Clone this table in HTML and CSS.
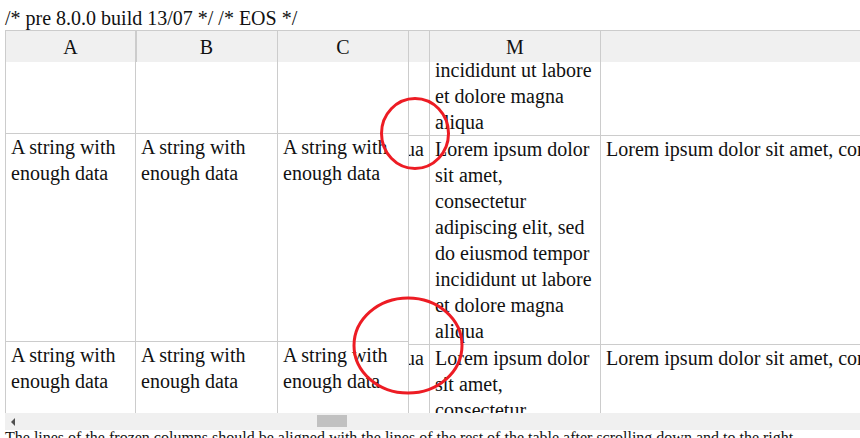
FILE: index.html
```html
<!DOCTYPE html>
<html>
<head>
<meta charset="utf-8">
<link rel="stylesheet" href="styles.css">
</head>
<body>
<div class="title">/* pre 8.0.0 build 13/07 */ /* EOS */</div>
<div class="hot">
  <div class="panes">
    <div class="pane frozen">
      <div class="hrow">
        <div class="hcell ca">A</div>
        <div class="hcell cb hb">B</div>
        <div class="hcell cc">C</div>
      </div>
      <div class="viewport">
        <div class="rows rows-frozen">
          <div class="row frow">
            <div class="cell ca">A string with enough data</div>
            <div class="cell cb">A string with enough data</div>
            <div class="cell cc">A string with enough data</div>
          </div>
          <div class="row frow">
            <div class="cell ca">A string with enough data</div>
            <div class="cell cb">A string with enough data</div>
            <div class="cell cc">A string with enough data</div>
          </div>
          <div class="row frow">
            <div class="cell ca">A string with enough data</div>
            <div class="cell cb">A string with enough data</div>
            <div class="cell cc">A string with enough data</div>
          </div>
        </div>
      </div>
    </div>
    <div class="pane main">
      <div class="hrow">
        <div class="hcell cl"></div>
        <div class="hcell cm">M</div>
        <div class="hcell cn"></div>
      </div>
      <div class="viewport">
        <div class="rows rows-main">
          <div class="row mrow">
            <div class="cell cl"><span>dolore magna aliqua</span></div>
            <div class="cell cm">Lorem ipsum dolor sit amet, consectetur adipiscing elit, sed do eiusmod tempor incididunt ut labore et dolore magna aliqua</div>
            <div class="cell cn">Lorem ipsum dolor sit amet, consectetur adipiscing elit, sed do eiusmod tempor incididunt ut labore et dolore magna aliqua</div>
          </div>
          <div class="row mrow">
            <div class="cell cl"><span>dolore magna aliqua</span></div>
            <div class="cell cm">Lorem ipsum dolor sit amet, consectetur adipiscing elit, sed do eiusmod tempor incididunt ut labore et dolore magna aliqua</div>
            <div class="cell cn">Lorem ipsum dolor sit amet, consectetur adipiscing elit, sed do eiusmod tempor incididunt ut labore et dolore magna aliqua</div>
          </div>
          <div class="row mrow">
            <div class="cell cl"><span>dolore magna aliqua</span></div>
            <div class="cell cm">Lorem ipsum dolor sit amet, consectetur adipiscing elit, sed do eiusmod tempor incididunt ut labore et dolore magna aliqua</div>
            <div class="cell cn">Lorem ipsum dolor sit amet, consectetur adipiscing elit, sed do eiusmod tempor incididunt ut labore et dolore magna aliqua</div>
          </div>
        </div>
      </div>
    </div>
  </div>
  <div class="hscroll">
    <span class="arrow"></span>
    <span class="thumb"></span>
  </div>
</div>
<p class="note">The lines of the frozen columns should be aligned with the lines of the rest of the table after scrolling down and to the right.</p>
<svg class="marks" width="860" height="438" viewBox="0 0 860 438">
  <ellipse cx="415" cy="133.5" rx="33.5" ry="35" fill="none" stroke="#ed1c24" stroke-width="3"/>
  <ellipse cx="408" cy="345.5" rx="54" ry="47.5" fill="none" stroke="#ed1c24" stroke-width="3"/>
</svg>
</body>
</html>
```

FILE: styles.css
```css
html, body {
  margin: 0;
  padding: 0;
  overflow: hidden;
  background: #fff;
}
body {
  position: relative;
  width: 860px;
  height: 438px;
  padding: 6px 0 0 5px;
  box-sizing: border-box;
  font-family: "Liberation Serif", "Times New Roman", serif;
  color: #111;
}
.title {
  font-size: 20px;
  line-height: 24px;
  white-space: nowrap;
}
.hot {
  width: 1600px;
}
.panes {
  display: flex;
  border-top: 1px solid #ccc;
  border-left: 1px solid #ccc;
  height: 383px;
  box-sizing: border-box;
}
.pane {
  display: flex;
  flex-direction: column;
  overflow: hidden;
}
.frozen {
  width: 403px;
  flex: none;
}
.main {
  flex: 1;
}
.hrow {
  display: flex;
  height: 31px;
  background: #f0f0f0;
  flex: none;
}
.hcell {
  box-sizing: border-box;
  border-right: 1px solid #ccc;
  font-size: 20px;
  line-height: 26px;
  padding-top: 3px;
  text-align: center;
  flex: none;
}
.hb {
  box-shadow: inset 1px 0 0 #ccc;
}
.viewport {
  flex: 1;
  overflow: hidden;
}
.rows-frozen {
  margin-top: -136px;
}
.rows-main {
  margin-top: -135px;
}
.row {
  display: flex;
  box-sizing: border-box;
  border-bottom: 1px solid #ccc;
}
.frow {
  height: 208px;
}
.mrow {
  height: 209px;
}
.cell {
  box-sizing: border-box;
  border-right: 1px solid #ccc;
  font-size: 20px;
  line-height: 26px;
  padding: 0 5px;
  overflow: hidden;
  flex: none;
  height: 100%;
}
.ca { width: 130px; }
.cb { width: 142px; }
.cc { width: 131px; }
.cl { width: 21px; }
.cm { width: 171px; }
.cn { width: 1000px; }
.cell.cl {
  display: flex;
  justify-content: flex-end;
  white-space: nowrap;
  padding: 0 5px 0 0;
}
.cell.cl span {
  flex: none;
}
.cell.cn {
  white-space: nowrap;
}
.hscroll {
  display: flex;
  align-items: flex-start;
  height: 17px;
  width: 855px;
  background: #f0f0f0;
}
.arrow {
  flex: none;
  width: 0;
  height: 0;
  margin: 5px 0 0 6px;
  border-top: 4px solid transparent;
  border-bottom: 4px solid transparent;
  border-right: 4px solid #505050;
}
.thumb {
  flex: none;
  width: 30px;
  height: 12px;
  margin: 2px 0 0 302px;
  background: #c1c1c1;
}
.note {
  margin: 0;
  font-size: 16px;
  line-height: 16px;
  white-space: nowrap;
}
.marks {
  position: absolute;
  left: 0;
  top: 0;
  pointer-events: none;
}
```
